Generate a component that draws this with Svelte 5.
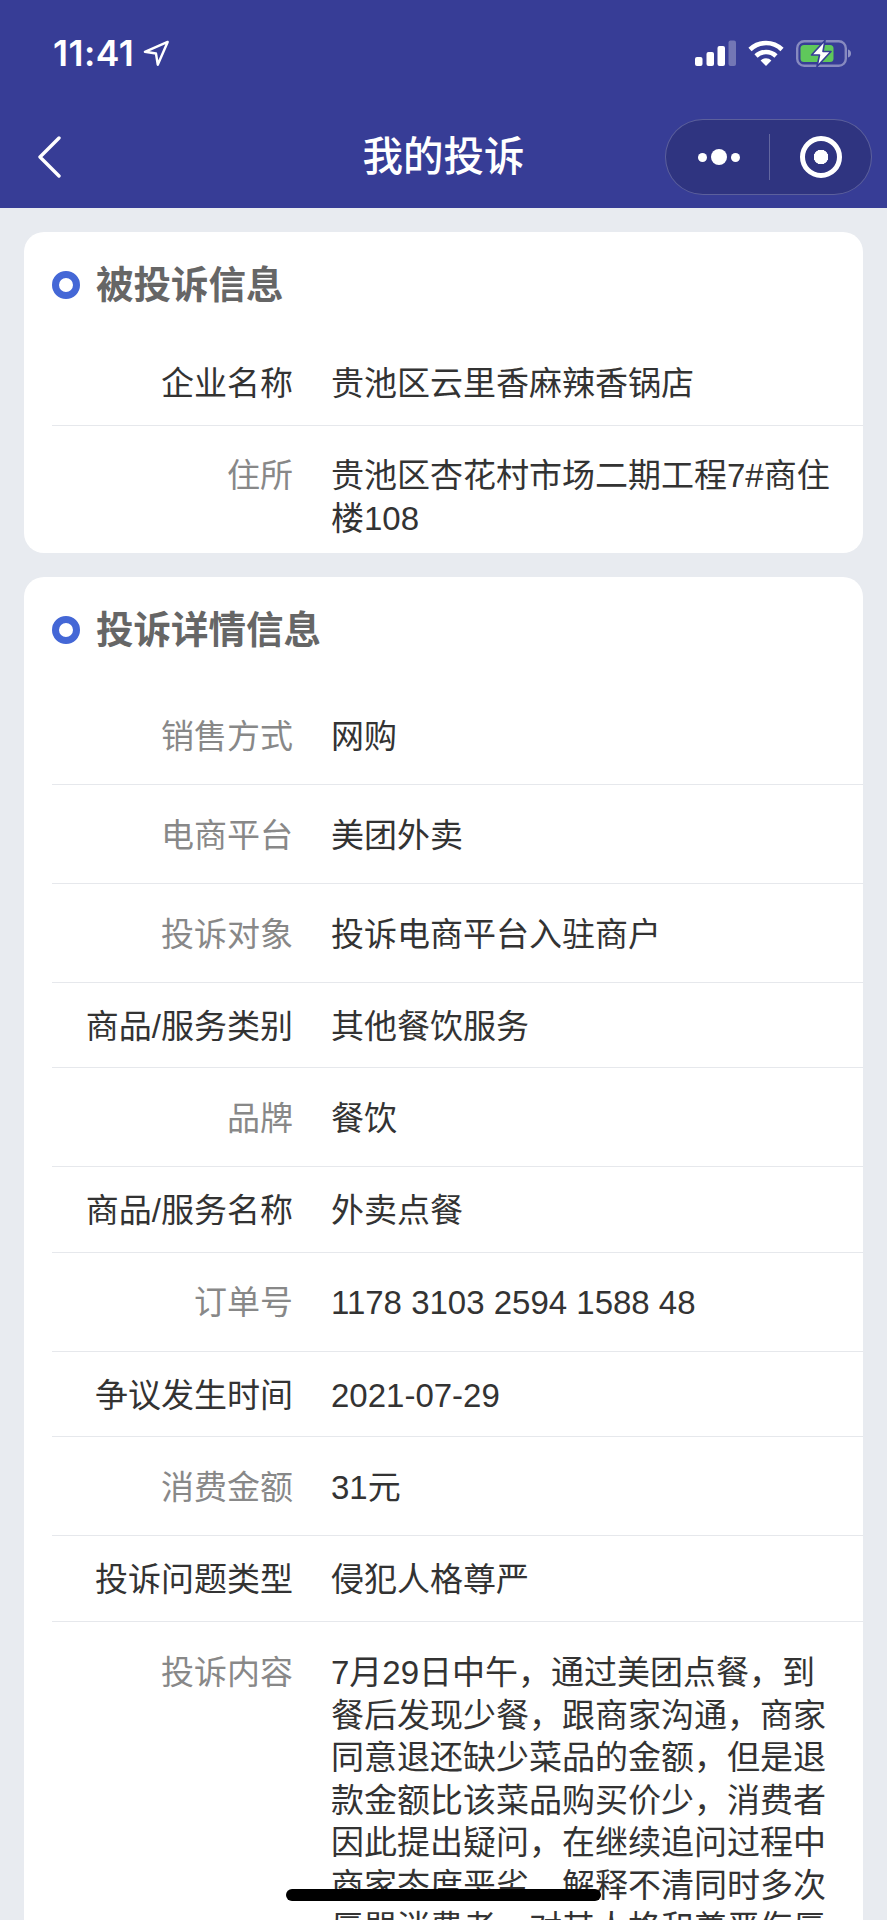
<script>
  const company = [
    { label: "企业名称", value: "贵池区云里香麻辣香锅店", strong: true },
    { label: "住所", value: "贵池区杏花村市场二期工程7#商住楼108", last: true }
  ];

  const details = [
    { label: "销售方式", value: "网购" },
    { label: "电商平台", value: "美团外卖" },
    { label: "投诉对象", value: "投诉电商平台入驻商户" },
    { label: "商品/服务类别", value: "其他餐饮服务", strong: true },
    { label: "品牌", value: "餐饮" },
    { label: "商品/服务名称", value: "外卖点餐", strong: true },
    { label: "订单号", value: "1178 3103 2594 1588 48" },
    { label: "争议发生时间", value: "2021-07-29", strong: true },
    { label: "消费金额", value: "31元" },
    { label: "投诉问题类型", value: "侵犯人格尊严", strong: true },
    {
      label: "投诉内容",
      value: "7月29日中午，通过美团点餐，到餐后发现少餐，跟商家沟通，商家同意退还缺少菜品的金额，但是退款金额比该菜品购买价少，消费者因此提出疑问，在继续追问过程中商家态度恶劣，解释不清同时多次辱骂消费者，对其人格和尊严侮辱",
      last: true
    }
  ];

  const sections = [
    { title: "被投诉信息", rows: company },
    { title: "投诉详情信息", rows: details }
  ];
</script>

<div class="page">
  <header class="header">
    <div class="status">
      <div class="clock">
        <span>11:41</span>
        <svg width="28" height="28" viewBox="0 0 24 24" fill="none" stroke="#fff" stroke-width="2.1" stroke-linejoin="round">
          <path d="M22 2.500 2.500 11 12 12.500 13.500 22z" />
        </svg>
      </div>
      <div class="indicators">
        <svg width="41" height="27" viewBox="0 0 41 27" fill="#fff">
          <rect x="0" y="17" width="7.5" height="9" rx="2" />
          <rect x="11.5" y="12" width="7.5" height="14" rx="2" />
          <rect x="22.5" y="6" width="7.5" height="20" rx="2" />
          <rect x="33.5" y="0.5" width="7.5" height="25.5" rx="2" opacity="0.3" />
        </svg>
        <svg width="36" height="27" viewBox="0 0 36 27" fill="none" stroke="#fff" stroke-width="4.6">
          <path d="M2 9.5a23 23 0 0 1 32 0" />
          <path d="M8 16a14.5 14.5 0 0 1 20 0" />
          <path d="M18 26 12.6 20.6a7.6 7.6 0 0 1 10.8 0z" fill="#fff" stroke="none" />
        </svg>
        <svg width="56" height="27" viewBox="0 0 56 27" fill="none">
          <rect x="1.2" y="1.2" width="48.6" height="24.6" rx="7" stroke="#fff" stroke-opacity="0.4" stroke-width="2.4" />
          <rect x="4.5" y="5" width="33" height="17" rx="3.5" fill="#5fc85b" />
          <path d="M52 9.5c2 .6 3 2 3 4s-1 3.4-3 4z" fill="#fff" fill-opacity="0.45" />
          <path d="M29 0.5 15.500 15h8L21 26.500 35 11.500h-8z" fill="#fff" stroke="#373d96" stroke-width="1.6" stroke-linejoin="round" />
        </svg>
      </div>
    </div>
    <nav class="nav">
      <svg class="back" width="24" height="42" viewBox="0 0 24 42" fill="none" stroke="#fff" stroke-width="3.4" stroke-linecap="round" stroke-linejoin="round">
        <path d="M22 2 3 21l19 19" />
      </svg>
      <h1>我的投诉</h1>
      <div class="capsule">
        <div class="dots">
          <i class="dot small"></i>
          <i class="dot"></i>
          <i class="dot small"></i>
        </div>
        <div class="divider"></div>
        <div class="target"><i></i></div>
      </div>
    </nav>
  </header>

  <main class="content">
    {#each sections as section}
      <section class="card">
        <div class="card-title">
          <i class="ring"></i>
          <h2>{section.title}</h2>
        </div>
        {#each section.rows as row}
          <div class="row" class:strong={row.strong} class:last={row.last}>
            <div class="label">{row.label}</div>
            <div class="value">{row.value}</div>
          </div>
        {/each}
      </section>
    {/each}
  </main>

  <div class="home-bar"></div>
</div>

<style>
  :global(body) {
    margin: 0;
    background: #e8ebf0;
  }

  .page {
    position: relative;
    height: 1920px;
    overflow: hidden;
    background: #e8ebf0;
    font-family: "Liberation Sans", "Noto Sans CJK SC", sans-serif;
    color: #333;
  }

  .header {
    height: 208px;
    background: #373d96;
    color: #fff;
  }

  .status {
    display: flex;
    justify-content: space-between;
    align-items: center;
    height: 106px;
    padding: 0 35px 0 53px;
  }

  .clock {
    display: flex;
    align-items: center;
    gap: 8px;
    font-family: Inter, sans-serif;
    font-size: 35.5px;
    font-weight: 600;
    letter-spacing: 0.5px;
  }

  .indicators {
    display: flex;
    align-items: center;
    gap: 12px;
  }

  .nav {
    position: relative;
    display: flex;
    align-items: center;
    justify-content: space-between;
    height: 102px;
    padding: 0 15px 0 37px;
  }

  .nav h1 {
    position: absolute;
    left: 0;
    right: 0;
    top: 26px;
    margin: 0;
    text-align: center;
    font-size: 40.5px;
    line-height: 50px;
    font-weight: 500;
  }

  .capsule {
    display: flex;
    align-items: center;
    box-sizing: border-box;
    width: 207px;
    height: 76px;
    border: 1px solid rgba(255, 255, 255, 0.22);
    border-radius: 38px;
    background: #2f3480;
  }

  .dots {
    display: flex;
    align-items: center;
    justify-content: center;
    gap: 4px;
    flex: 1;
    padding-left: 2px;
  }

  .dot {
    width: 16px;
    height: 16px;
    border-radius: 50%;
    background: #fff;
  }

  .dot.small {
    width: 9px;
    height: 9px;
  }

  .divider {
    width: 1px;
    height: 46px;
    background: rgba(255, 255, 255, 0.25);
  }

  .target {
    display: flex;
    align-items: center;
    justify-content: center;
    flex: 1;
  }

  .target i {
    box-sizing: border-box;
    width: 42px;
    height: 42px;
    border: 5px solid #fff;
    border-radius: 50%;
    background: radial-gradient(circle, #fff 0 7px, transparent 7.5px);
  }

  .content {
    display: flex;
    flex-direction: column;
    gap: 24px;
    padding: 24px;
  }

  .card {
    padding-left: 28px;
    border-radius: 20px;
    background: #fff;
  }

  .card-title {
    display: flex;
    align-items: center;
    gap: 16px;
    height: 108px;
    padding-bottom: 5px;
    box-sizing: border-box;
  }

  .card + .card .card-title {
    height: 109px;
    padding-bottom: 6px;
  }

  .ring {
    box-sizing: border-box;
    width: 28px;
    height: 28px;
    margin-top: 2.5px;
    border: 7.5px solid #4467d6;
    border-radius: 50%;
  }

  .card-title h2 {
    margin: -5px 0 0;
    font-size: 37.5px;
    font-weight: 700;
    color: #666;
  }

  .row {
    display: flex;
    gap: 38px;
    padding: 29.7px 24px 25.7px 0;
    border-bottom: 1px solid #e6e8ec;
    font-size: 33px;
    line-height: 42.5px;
  }

  .row.strong {
    padding-top: 23.05px;
    padding-bottom: 19.05px;
  }

  .row.strong .label {
    color: #333;
  }

  .row.last {
    padding-top: 29.5px;
    padding-bottom: 13px;
    border-bottom: 0;
  }

  .card + .card .row.last {
    padding-top: 30.5px;
  }

  .label {
    flex: none;
    width: 241px;
    text-align: right;
    color: #888;
  }

  .value {
    flex: 1;
    color: #333;
  }

  .home-bar {
    position: absolute;
    left: 286px;
    top: 1889px;
    width: 315px;
    height: 12px;
    border-radius: 6px;
    background: #000;
  }
</style>
